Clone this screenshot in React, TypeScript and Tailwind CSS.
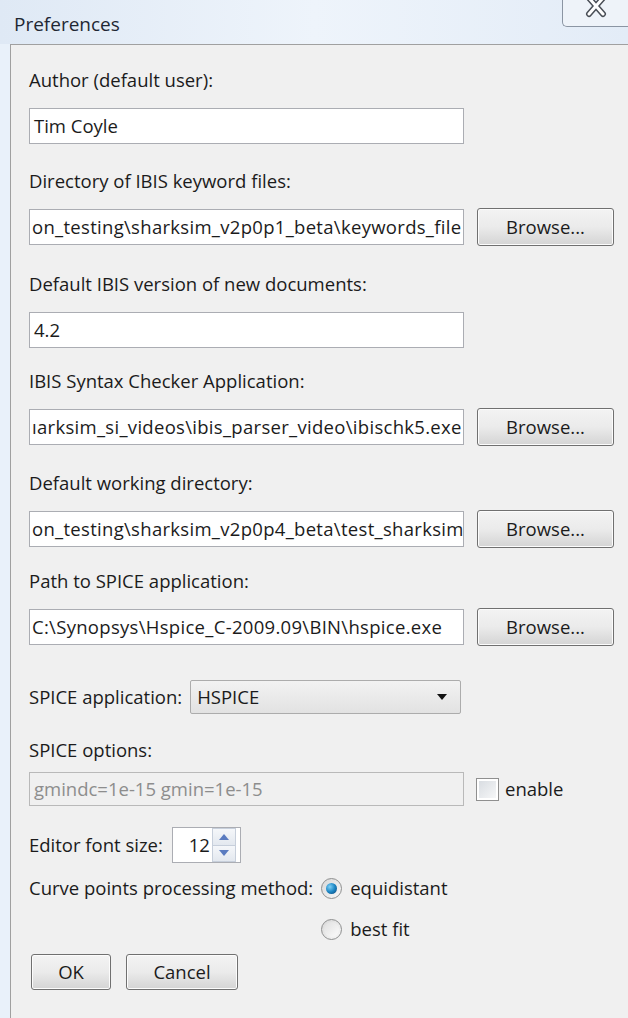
import React from 'react';

const font = { fontFamily: '"Open Sans", "Noto Sans", sans-serif' };

const Label: React.FC<{ children: React.ReactNode; className?: string }> = ({ children, className = '' }) => (
  <div className={`h-[24px] leading-[24px] text-[18.5px] text-[#1b1b1b] whitespace-nowrap ${className}`}>{children}</div>
);

const TextField: React.FC<{ value: string; tight?: boolean }> = ({ value, tight }) => (
  <div
    className={`flex h-[36px] w-[435px] items-center overflow-hidden border border-[#abadb3] bg-white text-[18.5px] text-[#1b1b1b] whitespace-nowrap ${
      tight ? 'pl-[2px] tracking-[0.3px]' : 'pl-[4px]'
    }`}
  >
    {value}
  </div>
);

const Button: React.FC<{ children: React.ReactNode; className?: string }> = ({ children, className = '' }) => (
  <button
    className={`flex items-center justify-center rounded-[3px] border border-[#707070] bg-linear-to-b from-[#f3f3f3] via-[#ebebeb] to-[#d4d4d4] text-[18.5px] text-[#1b1b1b] shadow-[inset_0_0_0_1px_#fcfcfc] ${className}`}
  >
    {children}
  </button>
);

const BrowseRow: React.FC<{ value: string }> = ({ value }) => (
  <div className="flex h-[38px] items-center gap-[13px]">
    <TextField value={value} tight />
    <Button className="h-[38px] w-[137px]">Browse...</Button>
  </div>
);

const Group: React.FC<{ label: string; children: React.ReactNode; className?: string }> = ({ label, children, className = '' }) => (
  <div className={className}>
    <Label>{label}</Label>
    <div className="mt-[15px] flex h-[38px] items-center">{children}</div>
  </div>
);

const CloseGlyph = () => (
  <svg width="24" height="20" viewBox="0 0 24 20">
    <path d="M5 -2 L19 14 M19 -2 L5 14" stroke="#4a4f57" strokeWidth="6" strokeLinecap="round" />
    <path d="M5 -2 L19 14 M19 -2 L5 14" stroke="#ffffff" strokeWidth="3" strokeLinecap="round" />
  </svg>
);

const Spinner = () => (
  <div className="flex h-[36px] w-[69px] items-center border border-[#abadb3] bg-white">
    <span className="flex-1 pr-[2px] text-right text-[18.5px] text-[#1b1b1b]">12</span>
    <div className="mr-[4px] flex h-[34px] w-[24px] flex-col">
      <div className="flex flex-1 items-center justify-center border border-[#c7cfdb] bg-linear-to-b from-[#f5f7fa] to-[#e3e8ef]">
        <svg width="10" height="6" viewBox="0 0 10 6">
          <path d="M0 6 L5 0 L10 6 Z" fill="#5a7bc0" />
        </svg>
      </div>
      <div className="flex flex-1 items-center justify-center border border-t-0 border-[#c7cfdb] bg-linear-to-b from-[#f5f7fa] to-[#e3e8ef]">
        <svg width="10" height="6" viewBox="0 0 10 6">
          <path d="M0 0 L10 0 L5 6 Z" fill="#5a7bc0" />
        </svg>
      </div>
    </div>
  </div>
);

const Radio: React.FC<{ checked?: boolean }> = ({ checked }) => (
  <div className="flex h-[21px] w-[21px] items-center justify-center rounded-full border border-[#8e8f8f] bg-linear-to-br from-[#d8d8d8] to-[#f8f8f8]">
    {checked ? (
      <div className="h-[11px] w-[11px] rounded-full bg-radial-[at_35%_35%] from-[#7fd0f6] via-[#1c86c4] to-[#0a3f72]" />
    ) : (
      <div className="h-[15px] w-[15px] rounded-full bg-linear-to-br from-[#e0e0e0] to-[#fbfbfb]" />
    )}
  </div>
);

export default function App() {
  return (
    <div className="h-[1018px] w-[628px] overflow-hidden bg-[#e9f1fa]" style={font}>
      {/* window caption */}
      <div className="flex h-[44px] bg-linear-to-r from-[#dfe9f5] via-[#eef4fb] to-[#e3ecf7]">
        <div className="pl-[14px] pt-[12px] text-[19px] leading-[24px] text-[#1e2733]">Preferences</div>
        <div className="ml-auto flex h-[27px] w-[66px] items-start justify-center rounded-bl-[5px] border-b border-l border-[#8b95a3] bg-[#eef3f9]">
          <CloseGlyph />
        </div>
      </div>

      <div className="ml-[10px] h-[974px] border-l border-t border-[#a0a0a0] bg-[#f0f0f0] pl-[18px] pt-[23px]">
        <Group label="Author (default user):">
          <TextField value="Tim Coyle" />
        </Group>
        <Group label="Directory of IBIS keyword files:" className="mt-[24px]">
          <BrowseRow value="on_testing\sharksim_v2p0p1_beta\keywords_file" />
        </Group>
        <Group label="Default IBIS version of new documents:" className="mt-[26px]">
          <TextField value="4.2" />
        </Group>
        <Group label="IBIS Syntax Checker Application:" className="mt-[20px]">
          <BrowseRow value="ıarksim_si_videos\ibis_parser_video\ibischk5.exe" />
        </Group>
        <Group label="Default working directory:" className="mt-[25px]">
          <BrowseRow value="on_testing\sharksim_v2p0p4_beta\test_sharksim" />
        </Group>
        <Group label="Path to SPICE application:" className="mt-[21px]">
          <BrowseRow value="C:\Synopsys\Hspice_C-2009.09\BIN\hspice.exe" />
        </Group>

        <div className="mt-[34px] flex h-[34px] items-center gap-[8px]">
          <Label>SPICE application:</Label>
          <div className="flex h-[34px] w-[271px] items-center rounded-[2px] border border-[#acacac] bg-linear-to-b from-[#f2f2f2] to-[#e2e2e2] pl-[6px] pr-[13px] text-[18.5px] text-[#1b1b1b]">
            <span className="flex-1">HSPICE</span>
            <svg width="10" height="6" viewBox="0 0 10 6">
              <path d="M0 0 L10 0 L5 6 Z" fill="#111" />
            </svg>
          </div>
        </div>

        <Label className="mt-[24px]">SPICE options:</Label>
        <div className="mt-[10px] flex h-[34px] items-center">
          <div className="flex h-[34px] w-[435px] items-center border border-[#b9b9b9] bg-[#f0f0f0] pl-[4px] text-[18.5px] text-[#8d8d8d]">
            gmindc=1e-15 gmin=1e-15
          </div>
          <div className="ml-[12px] flex h-[23px] w-[23px] items-center justify-center border border-[#8f8f8f] bg-white">
            <div className="h-[17px] w-[17px] bg-linear-to-br from-[#d9dde2] to-[#f6f7f8]" />
          </div>
          <span className="ml-[6px] text-[18.5px] text-[#1b1b1b]">enable</span>
        </div>

        <div className="mt-[21px] flex h-[36px] items-center gap-[9px]">
          <Label>Editor font size:</Label>
          <Spinner />
        </div>

        {/* radio choices share one column */}
        <div className="mt-[13px] grid grid-cols-[auto_auto] justify-start gap-x-[8px] gap-y-[17px]">
          <Label>Curve points processing method:</Label>
          <div className="flex h-[24px] items-center gap-[8px]">
            <Radio checked />
            <span className="text-[18.5px] text-[#1b1b1b]">equidistant</span>
          </div>
          <div />
          <div className="flex h-[24px] items-center gap-[8px]">
            <Radio />
            <span className="text-[18.5px] text-[#1b1b1b]">best fit</span>
          </div>
        </div>

        <div className="mt-[13px] flex gap-[15px] pl-[2px]">
          <Button className="h-[36px] w-[80px]">OK</Button>
          <Button className="h-[36px] w-[112px]">Cancel</Button>
        </div>
      </div>
    </div>
  );
}
